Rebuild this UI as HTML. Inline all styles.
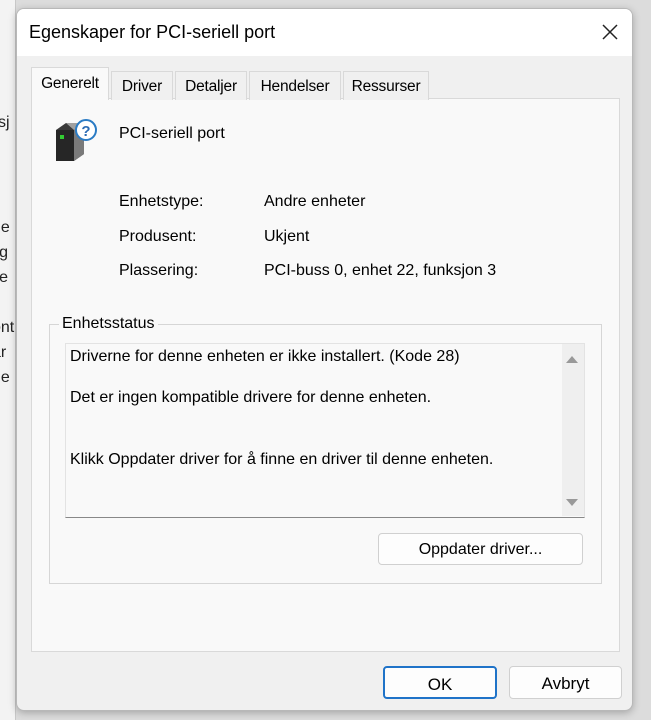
<!DOCTYPE html>
<html><head><meta charset="utf-8"><style>
*{box-sizing:border-box;margin:0;padding:0}
body{width:651px;height:720px;overflow:hidden;background:#dcdcdc;font-family:"Liberation Sans",Arial,sans-serif;color:#000;position:relative;font-size:16px}
.abs{position:absolute}
#bgl{left:0;top:0;width:16px;height:720px;background:#f3f3f3;border-right:1px solid #c8c8c8;overflow:hidden}
#dlg{left:16px;top:8px;width:617px;height:703px;background:#f0f0f0;border:1px solid #b8b8b8;border-radius:8px;box-shadow:0 2px 8px rgba(0,0,0,.25);overflow:hidden}
#title{left:0;top:0;width:100%;height:47px;background:#fff}
.tab{position:absolute;top:62px;height:29px;border:1px solid #d9d9d9;border-bottom:none;background:#f0f0f0;padding:6px 0 0;text-align:center;font-size:15.5px;letter-spacing:-.2px}
#panel{left:14px;top:89px;width:589px;height:554px;background:#f9f9f9;border:1px solid #d9d9d9}
.btn{position:absolute;background:#fdfdfd;border:1px solid #d0d0d0;border-radius:4px;text-align:center;font-size:16px}
</style></head><body>
<div id="bgl" class="abs">
<div class="abs" style="left:-2px;top:110px;line-height:25px;color:#222">sj</div>
<div class="abs" style="left:-8px;top:215px;line-height:25px;color:#222">ne<br>lig<br>lle<br><br>ont<br>ar<br>he</div>
</div>
<div id="dlg" class="abs">
<div id="title" class="abs"><div class="abs" style="left:12px;top:13px;font-size:18px">Egenskaper for PCI-seriell port</div>
<svg class="abs" style="left:585px;top:15px" width="16" height="16"><path d="M1 1L15 15M15 1L1 15" stroke="#222" stroke-width="1.5"/></svg></div>
<div id="panel" class="abs"></div>
<div class="tab" style="left:14px;top:58px;height:33px;width:78px;background:#f9f9f9;z-index:2;padding-top:7px">Generelt</div>
<div class="tab" style="left:94px;width:62px">Driver</div>
<div class="tab" style="left:158px;width:72px">Detaljer</div>
<div class="tab" style="left:232px;width:92px">Hendelser</div>
<div class="tab" style="left:326px;width:86px">Ressurser</div>
<svg class="abs" style="left:37px;top:109px" width="46" height="46">
<path d="M2 12L12 5H30V36L20 43H2Z" fill="#3a3a3a"/><path d="M12 5H30V36H20V12Z" fill="#a0a0a0"/><path d="M20 12L30 5V36L20 43Z" fill="#7a7a7a"/><path d="M2 12H20V43H2Z" fill="#262626"/><rect x="6" y="17" width="4" height="4" fill="#3c3"/>
<circle cx="32" cy="12" r="10" fill="#fff" stroke="#2a7bc4" stroke-width="2"/><text x="32" y="18" font-size="15" font-weight="bold" text-anchor="middle" fill="#2a6bb4" font-family="Liberation Sans">?</text></svg>
<div class="abs" style="left:102px;top:116px">PCI-seriell port</div>
<div class="abs" style="left:102px;top:176px;line-height:34.5px">Enhetstype:<br>Produsent:<br>Plassering:</div>
<div class="abs" style="left:247px;top:176px;line-height:34.5px">Andre enheter<br>Ukjent<br>PCI-buss 0, enhet 22, funksjon 3</div>
<div class="abs" style="left:32px;top:315px;width:553px;height:260px;border:1px solid #d6d6d6"></div>
<div class="abs" style="left:42px;top:306px;background:#f9f9f9;padding:0 3px">Enhetsstatus</div>
<div class="abs" style="left:48px;top:334px;width:520px;height:175px;background:#f9f9f9;border:1px solid #e3e3e3;border-bottom:1px solid #888"></div>
<div class="abs" style="left:545px;top:335px;width:22px;height:172px;background:#efefef"></div>
<svg class="abs" style="left:548px;top:345px" width="14" height="10"><path d="M1 9L7 2L13 9Z" fill="#999"/></svg>
<svg class="abs" style="left:548px;top:489px" width="14" height="10"><path d="M1 1L7 8L13 1Z" fill="#999"/></svg>
<div class="abs" style="left:53px;top:338px;line-height:20px">Driverne for denne enheten er ikke installert. (Kode 28)</div>
<div class="abs" style="left:53px;top:380px">Det er ingen kompatible drivere for denne enheten.</div>
<div class="abs" style="left:53px;top:442px">Klikk Oppdater driver for å finne en driver til denne enheten.</div>
<div class="btn" style="left:361px;top:524px;width:205px;height:32px;padding-top:7px">Oppdater driver...</div>
<div class="btn" style="left:366px;top:657px;width:114px;height:33px;padding-top:7px;border:2px solid #1f73c8;font-size:17px">OK</div>
<div class="btn" style="left:492px;top:657px;width:113px;height:33px;padding-top:7px;font-size:17px">Avbryt</div>
</div>
</body></html>
